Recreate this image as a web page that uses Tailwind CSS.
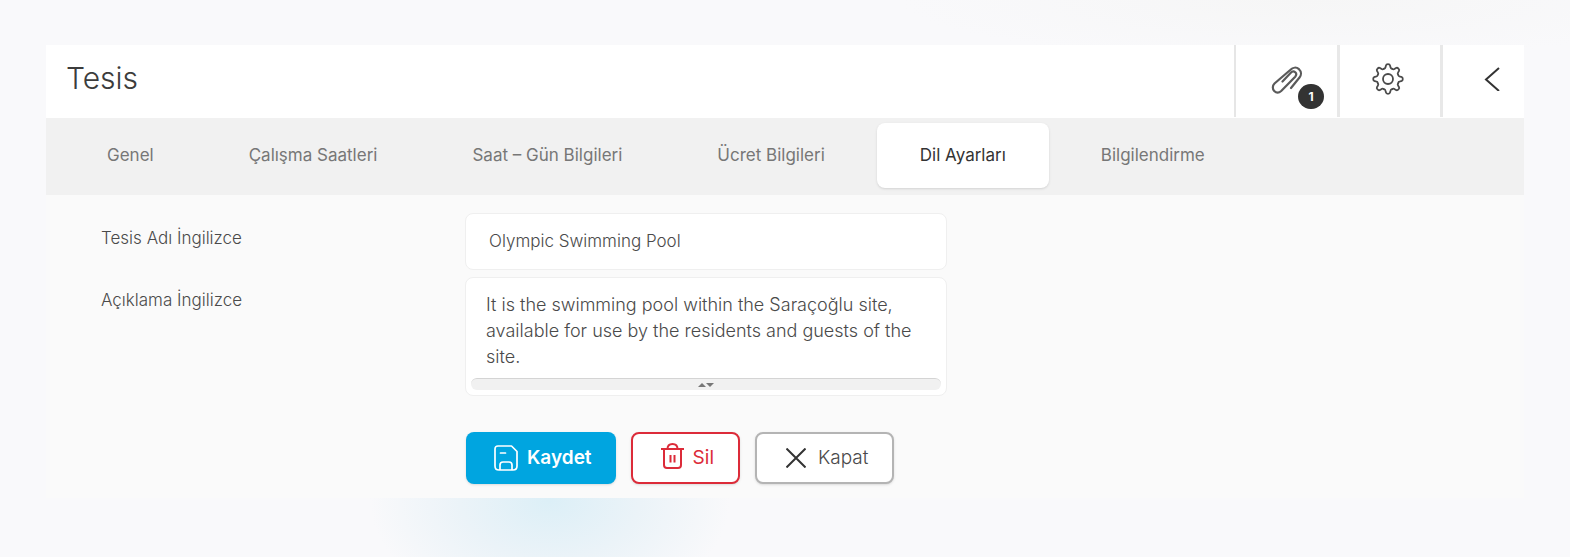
<!DOCTYPE html>
<html lang="tr">
<head>
  <meta charset="UTF-8">
  <title>Tesis</title>
  <meta name="viewport" content="width=device-width, initial-scale=1.0">
  <script src="https://cdn.jsdelivr.net/npm/@tailwindcss/browser@4"></script>
</head>
<body class="min-h-screen bg-[#f9f9fb] bg-[radial-gradient(ellipse_180px_120px_at_550px_500px,#dceff7,#ebf3f8_50%,transparent),radial-gradient(ellipse_400px_60px_at_1300px_0px,#f6f6f6,transparent)] px-[46px] pt-[45px] pb-[60px] font-['Inter',sans-serif] text-[#4a4a4a]">

  <main class="bg-[#fafafa]">
    <header class="flex h-[73px] bg-white">
      <h1 class="flex-1 pl-5 pt-[13px] text-3xl leading-10 font-light text-[#3c3c3c]">Tesis</h1>

      <div class="flex h-[72px]">
        <button type="button" aria-label="Ekler" class="relative flex w-[103px] items-center justify-center border-l-2 border-[#e6e6e6] pb-1">
          <svg class="h-8 w-8" viewBox="0 0 32 32" fill="none" stroke="#5a5a5a" stroke-width="2.2" stroke-linecap="round">
            <path d="M20 25 28.500 14.500C30.500 12 30.500 8.500 28 6.200 25.400 4 21.800 4.300 19.500 6.800L3.500 20.500C1.500 22.500 1.200 26 3.200 28 5.200 30 8 30 10.200 28L24.200 13.700C25.400 12.300 25.500 10.500 24.300 9.300 23 8.200 21.200 8.300 19.800 9.700L11.500 18.500"/>
          </svg>
          <span class="absolute top-[39px] left-[62px] flex h-[25px] w-[26px] items-center justify-center rounded-full bg-[#333] text-xs font-bold text-white">1</span>
        </button>

        <button type="button" aria-label="Ayarlar" class="flex w-[103px] items-center justify-center border-l-3 border-[#e8e8e8] pr-1 pb-1">
          <svg class="h-8 w-8" viewBox="0 0 32 32" fill="none" stroke="#4a4a4a" stroke-width="1.8" stroke-linecap="round">
            <defs>
              <path id="dis" d="M11.800 5.800Q13.300 5.700 13.600 4L13.900 2.600Q14.200 1.200 16 1.200T18.100 2.600L18.400 4Q18.700 5.700 20.200 5.800"/>
            </defs>
            <circle cx="16" cy="16" r="5"/>
            <use href="#dis"/>
            <use href="#dis" transform="rotate(45 16 16)"/>
            <use href="#dis" transform="rotate(90 16 16)"/>
            <use href="#dis" transform="rotate(135 16 16)"/>
            <use href="#dis" transform="rotate(180 16 16)"/>
            <use href="#dis" transform="rotate(225 16 16)"/>
            <use href="#dis" transform="rotate(270 16 16)"/>
            <use href="#dis" transform="rotate(315 16 16)"/>
          </svg>
        </button>

        <button type="button" aria-label="Geri" class="flex w-[84px] items-center justify-center border-l-3 border-[#e8e8e8] pb-1 pl-4">
          <svg class="h-6 w-4" viewBox="0 0 16 24" fill="none" stroke="#333" stroke-width="2">
            <path d="M15 1 2 12.500 15 24"/>
          </svg>
        </button>
      </div>
    </header>

    <nav class="flex h-[77px] items-start gap-[9px] bg-[#f1f1f1] pt-[5px] pl-[18px] text-[17px] leading-[65px] text-[#777]">
      <a href="#" class="px-[43px]">Genel</a>
      <a href="#" class="px-[43px]">Çalışma Saatleri</a>
      <a href="#" class="px-[43px]">Saat – Gün Bilgileri</a>
      <a href="#" class="px-[43px]">Ücret Bilgileri</a>
      <a href="#" aria-current="page" class="rounded-lg bg-white px-[43px] text-[#333] shadow-sm">Dil Ayarları</a>
      <a href="#" class="px-[43px]">Bilgilendirme</a>
    </nav>

    <form class="pt-[18px] pb-[14px] pl-[55px]" onsubmit="return false">
      <div class="flex">
        <label for="ad" class="w-[364px] pt-3 text-[17px] leading-[26px] font-light">Tesis Adı İngilizce</label>
        <input id="ad" type="text" value="Olympic Swimming Pool" class="h-[57px] w-[482px] rounded-lg border border-[#efefef] bg-white px-[23px] pb-[2px] text-[17px] font-light outline-none">
      </div>

      <div class="mt-[7px] flex">
        <label for="aciklama" class="w-[364px] pt-[10px] text-[17px] leading-[26px] font-light">Açıklama İngilizce</label>
        <div class="w-[482px] rounded-lg border border-[#efefef] bg-white px-[5px] pt-[14px] pb-[5px]">
          <textarea id="aciklama" rows="3" class="block h-[86px] w-full resize-none overflow-hidden px-[15px] text-lg leading-[26px] font-light outline-none">It is the swimming pool within the Saraçoğlu site, available for use by the residents and guests of the site.</textarea>
          <div class="flex h-3 items-center justify-center rounded-full border-t border-[#d4d4d4] bg-[#f1f1f1]">
            <svg class="h-[6px] w-4" viewBox="0 0 16 6" fill="#777"><path d="M0 5 4 1 8 5ZM8 1h8l-4 4Z"/></svg>
          </div>
        </div>
      </div>

      <div class="mt-9 ml-[365px] flex gap-[15px] text-[19px]">
        <button type="submit" class="flex h-[52px] items-center gap-[9px] rounded-lg bg-[#00a5e0] pr-6 pl-7 font-semibold text-white shadow-sm">
          <svg class="h-[26px] w-6" viewBox="0 0 24 26" fill="none" stroke="#fff" stroke-width="1.7" stroke-linecap="round" stroke-linejoin="round">
            <path d="M4 1h13.500L23 6.500V21q0 4-4 4H5q-4 0-4-4V4q0-3 3-3ZM6 25v-5q0-3 3-3h6q3 0 3 3v5M6.500 8h5"/>
          </svg>
          Kaydet
        </button>
        <button type="button" class="flex h-[52px] items-center gap-[9px] rounded-lg border-2 border-[#dc2b39] bg-white pr-6 pl-7 text-[#dc2b39] shadow-sm">
          <svg class="mb-1 h-[26px] w-[23px]" viewBox="0 0 23 26" fill="none" stroke="#dc2b39" stroke-width="2">
            <path d="M0 6h23M3 6v16q0 3 3 3h11q3 0 3-3V6M6.500 6q0-5 5-5t5 5M9.500 12v7.500M13.500 12v7.500"/>
          </svg>
          Sil
        </button>
        <button type="button" class="flex h-[52px] items-center gap-3 rounded-lg border-2 border-[#b4b4b4] bg-white pr-6 pl-[29px] font-light shadow-sm">
          <svg class="h-5 w-5" viewBox="0 0 20 20" fill="none" stroke="#333" stroke-width="2"><path d="M.5.5l19 19M19.500.5l-19 19"/></svg>
          Kapat
        </button>
      </div>
    </form>
  </main>

</body>
</html>
